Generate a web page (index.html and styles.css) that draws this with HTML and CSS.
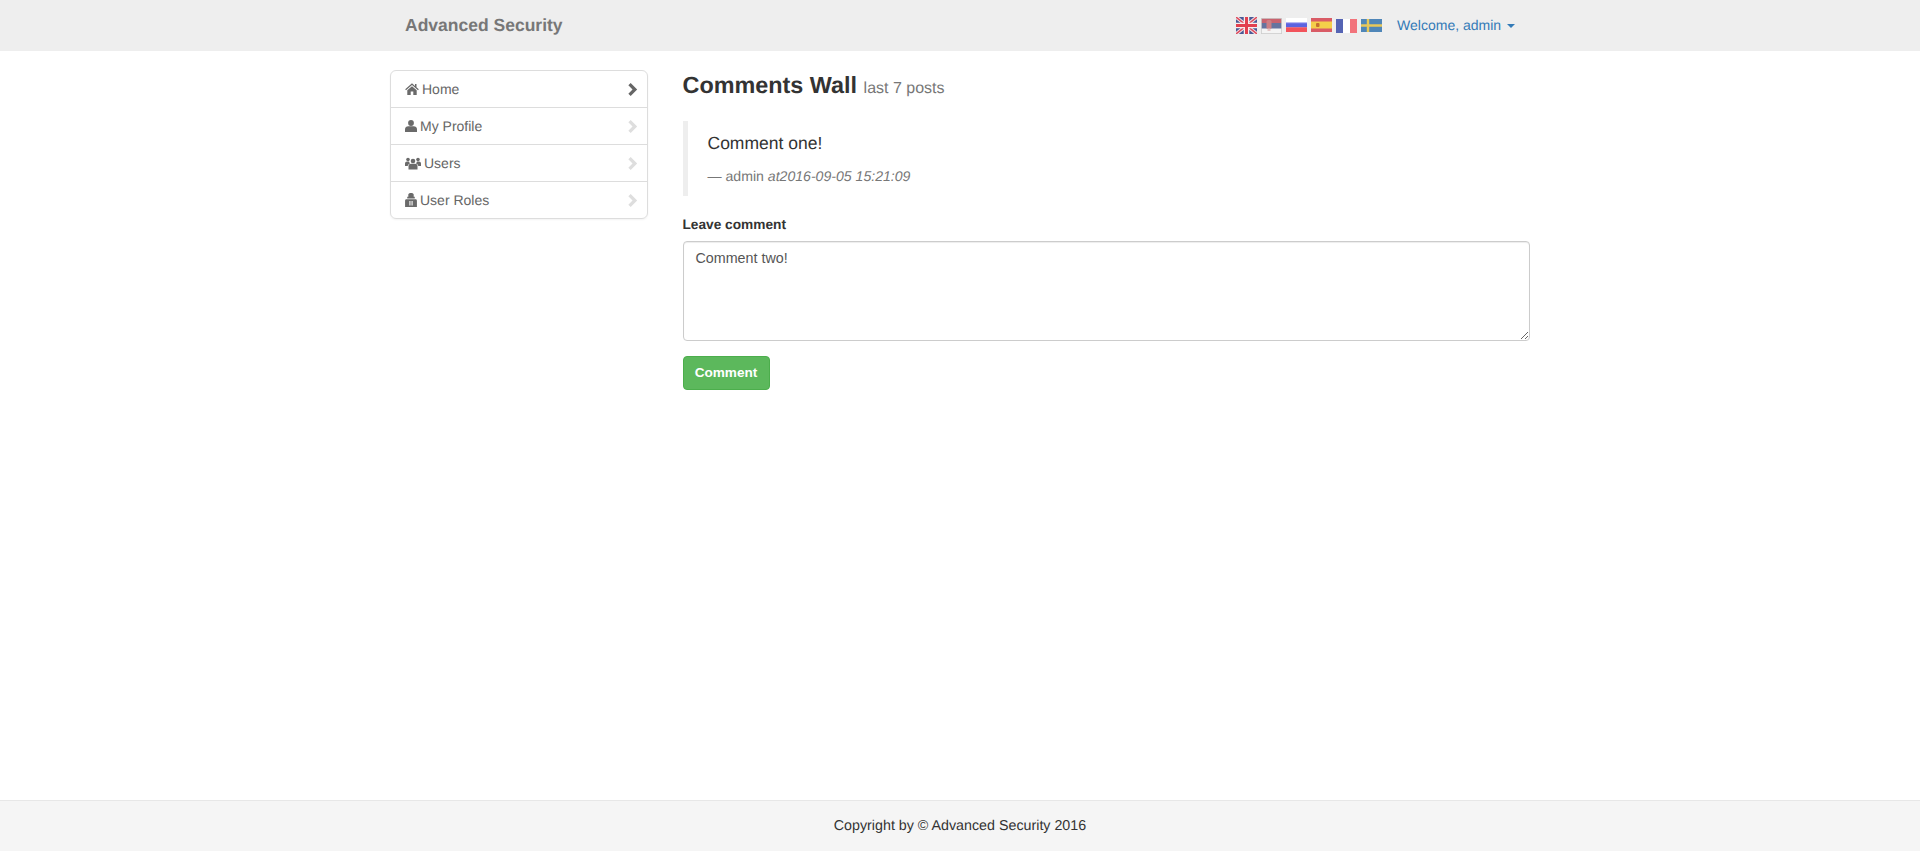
FILE: index.html
```html
<!DOCTYPE html>
<html lang="en">
<head>
<meta charset="utf-8">
<title>Comments Wall</title>
<link rel="stylesheet" href="styles.css">
</head>
<body>
<header class="navbar">
  <div class="container nav-inner">
    <a class="brand" href="#">Advanced Security</a>
    <div class="nav-right">
      <div class="flags">
        <svg class="flag f-uk" viewBox="0 0 21 17"><rect width="21" height="17" fill="#4a5a96"/><path d="M0 0L21 17M21 0L0 17" stroke="#f3dfe2" stroke-width="3.5"/><path d="M0 0L21 17M21 0L0 17" stroke="#dd4a5c" stroke-width="1.4"/><path d="M10.500 0V17M0 8.500H21" stroke="#f8eeee" stroke-width="5.500"/><path d="M10.500 0V17M0 8.500H21" stroke="#e2404f" stroke-width="3"/></svg>
        <svg class="flag f-rs" viewBox="0 0 21 16"><rect width="21" height="16" fill="#f4f4f4"/><rect width="21" height="5" fill="#c9636f"/><rect y="5" width="21" height="5.500" fill="#66749f"/><rect x="5.500" y="2" width="5" height="9" rx="1.500" fill="#cc8085"/><rect x="6.500" y="10.500" width="3" height="2.500" fill="#e3c6c6"/><rect x=".4" y=".4" width="20.200" height="15.200" fill="none" stroke="#ccc" stroke-width=".8"/></svg>
        <svg class="flag f-ru" viewBox="0 0 21 14"><rect width="21" height="14" fill="#fff"/><rect y="4.200" width="21" height="1.600" fill="#a5a9f0"/><rect y="5.200" width="21" height="4.300" fill="#5b63e0"/><rect y="9.300" width="21" height="4.700" fill="#f2535b"/></svg>
        <svg class="flag f-es" viewBox="0 0 21 14"><rect width="21" height="14" fill="#d95b66"/><rect y="3.500" width="21" height="7" fill="#f4cf4a"/><rect x="5" y="5" width="3.500" height="4" rx="1" fill="#c5702f"/></svg>
        <svg class="flag f-fr" viewBox="0 0 21 14"><rect width="21" height="14" fill="#fff"/><rect width="7" height="14" fill="#5564b4"/><rect x="14" width="7" height="14" fill="#f2737b"/></svg>
        <svg class="flag f-se" viewBox="0 0 21 13"><rect width="21" height="13" fill="#4f86b8"/><path d="M7 0V13M0 6.500H21" stroke="#e8c859" stroke-width="2.400"/></svg>
      </div>
      <a class="welcome" href="#">Welcome, admin <span class="caret"></span></a>
    </div>
  </div>
</header>

<main class="container content">
  <nav class="sidebar">
    <a class="side-item" href="#"><span class="side-label"><svg class="ico ico-home" viewBox="0 0 14 12"><path d="M7 .3L.2 6.300l.8.900L7 2l6 5.200.8-.9-2.300-2V1H10v1.900z"/><path d="M2.300 7.300L7 3.300l4.700 4V12H8.300V8.500H5.700V12H2.300z"/></svg> Home</span><svg class="chev chev-on" viewBox="0 0 10 14"><path d="M0 2.500L2.500 0 9.500 7l-7 7L0 11.500 4.500 7z"/></svg></a>
    <a class="side-item" href="#"><span class="side-label"><svg class="ico ico-user" viewBox="0 0 12 12"><circle cx="6" cy="3" r="2.900"/><path d="M0 12V9.300C0 7.600 1.500 6.300 3.300 6.300h5.400C10.500 6.300 12 7.600 12 9.300V12z"/></svg> My Profile</span><svg class="chev" viewBox="0 0 10 14"><path d="M0 2.500L2.500 0 9.500 7l-7 7L0 11.500 4.500 7z"/></svg></a>
    <a class="side-item" href="#"><span class="side-label"><svg class="ico ico-users" viewBox="0 0 16 12"><circle cx="8" cy="3.500" r="2.300"/><circle cx="3" cy="2" r="1.800"/><circle cx="13" cy="2" r="1.800"/><path d="M3.500 12V8.500C3.500 7 4.700 6.300 6 6.300h4c1.300 0 2.500.7 2.500 2.200V12z"/><path d="M0 8.500V6c0-1.200 1-2 2-2h2c.3 1 .7 1.500 1.200 2C3.800 6.300 2.800 7.300 2.700 8.500zM16 8.500V6c0-1.200-1-2-2-2h-2c-.3 1-.7 1.500-1.200 2 1.400.3 2.400 1.300 2.500 2.500z"/></svg> Users</span><svg class="chev" viewBox="0 0 10 14"><path d="M0 2.500L2.500 0 9.500 7l-7 7L0 11.500 4.500 7z"/></svg></a>
    <a class="side-item" href="#"><span class="side-label"><svg class="ico ico-roles" viewBox="0 0 11 13"><path d="M3 1.500C3 .5 4 0 5.500 0S8 .5 8 1.500V3.500H9V5H2V3.500H3z"/><path fill-rule="evenodd" d="M1 5.800C0 6 0 7 0 8v5h11V8c0-1 0-2-1-2.200zM4 7.500h1v4H4zM6 7.500h1v4H6z"/></svg> User Roles</span><svg class="chev" viewBox="0 0 10 14"><path d="M0 2.500L2.500 0 9.500 7l-7 7L0 11.500 4.500 7z"/></svg></a>
  </nav>

  <section class="main">
    <h3 class="title">Comments Wall <small>last 7 posts</small></h3>
    <blockquote class="quote">
      <p>Comment one!</p>
      <footer>— admin <i>at2016-09-05 15:21:09</i></footer>
    </blockquote>
    <form class="comment-form">
      <label class="form-label" for="comment">Leave comment</label>
      <textarea id="comment" class="form-input">Comment two!</textarea>
      <button class="btn" type="button">Comment</button>
    </form>
  </section>
</main>

<footer class="page-footer">Copyright by © Advanced Security 2016</footer>
</body>
</html>
```
FILE: styles.css
```css
* { box-sizing: border-box; }
html, body { height: 100%; }
body {
  margin: 0;
  min-height: 851px;
  height: 851px;
  overflow: hidden;
  display: flex;
  flex-direction: column;
  background: #fff;
  color: #333;
  font: 14px/20px "Liberation Sans", Arial, sans-serif;
  text-rendering: geometricPrecision;
}
a { text-decoration: none; color: inherit; }

.container { width: 1170px; margin: 0 auto; padding: 0 15px; }

.navbar { height: 51px; background: #eee; flex: none; }
.nav-inner { display: flex; justify-content: space-between; align-items: center; height: 51px; padding-bottom: 2px; }
.brand { margin-left: 15px; font-size: 17.5px; font-weight: 700; color: #777; }
.nav-right { display: flex; align-items: center; margin-right: 15px; }
.flags { display: flex; align-items: flex-start; gap: 4px; height: 17px; margin-top: 1px; }
.flag { display: block; width: 21px; flex: none; }
.f-uk { height: 17px; }
.f-rs { height: 16px; margin-top: 1px; }
.f-ru { height: 14px; margin-top: 1px; }
.f-es { height: 14px; margin-top: 1px; }
.f-fr { height: 14px; margin-top: 2px; }
.f-se { height: 13px; margin-top: 2px; }
.welcome { margin-left: 15px; color: #337ab7; }
.caret {
  display: inline-block;
  width: 0; height: 0;
  margin-left: 2px;
  vertical-align: middle;
  border-top: 4px solid #337ab7;
  border-left: 4px solid transparent;
  border-right: 4px solid transparent;
}

.content { display: flex; gap: 34.5px; padding-top: 19px; flex: 1; }
.sidebar {
  width: 258px;
  height: 149px;
  flex: none;
  border: 1px solid #ddd;
  border-radius: 6px;
  box-shadow: 0 1px 2px rgba(0,0,0,.05);
  display: flex;
  flex-direction: column;
}
.side-item {
  height: 37px;
  padding: 0 9px 0 14px;
  display: flex;
  justify-content: space-between;
  align-items: center;
  color: #666;
  border-top: 1px solid #ddd;
}
.side-item:first-child { border-top: 0; height: 36px; }
.side-label { display: flex; align-items: center; gap: 3px; }
.ico { display: block; fill: #6a6a6a; flex: none; }
.ico-home { width: 14px; height: 12px; }
.ico-user { width: 12px; height: 12px; }
.ico-users { width: 16px; height: 13px; }
.ico-roles { width: 12px; height: 14px; }
.chev { display: block; width: 10px; height: 13px; fill: #dedede; }
.chev-on { fill: #666; }

.main { flex: 1; min-width: 0; }
.title { margin: 0; padding-top: 2px; font-size: 23.4px; line-height: 26px; font-weight: 700; color: #333; }
.title small { font-size: 16px; line-height: 1; font-weight: 400; color: #777; }
.quote {
  margin: 23px 0 0;
  padding: 10px 20px;
  height: 75px;
  border-left: 5px solid #eee;
}
.quote p { margin: 0 0 10px; font-size: 17.5px; line-height: 25px; color: #333; }
.quote footer { font-size: 14.1px; line-height: 20px; color: #777; }
.comment-form { margin-top: 19px; }
.form-label { display: block; font-size: 13.7px; font-weight: 700; margin-bottom: 6px; color: #333; }
.form-input {
  display: block;
  width: 100%;
  height: 100px;
  padding: 6px 12px;
  border: 1px solid #ccc;
  border-radius: 4px;
  box-shadow: inset 0 1px 1px rgba(0,0,0,.075);
  font: 14.3px/20px "Liberation Sans", Arial, sans-serif;
  color: #555;
}
.btn {
  display: block;
  margin-top: 15px;
  width: 87px;
  height: 34px;
  background: #5cb85c;
  border: 1px solid #4cae4c;
  border-radius: 4px;
  color: #fff;
  font: 700 13.600px/20px "Liberation Sans", Arial, sans-serif;
  padding: 0;
}

.page-footer {
  flex: none;
  height: 51px;
  background: #f5f5f5;
  border-top: 1px solid #e7e7e7;
  text-align: center;
  font-size: 14.28px;
  line-height: 50px;
  color: #333;
}
```
